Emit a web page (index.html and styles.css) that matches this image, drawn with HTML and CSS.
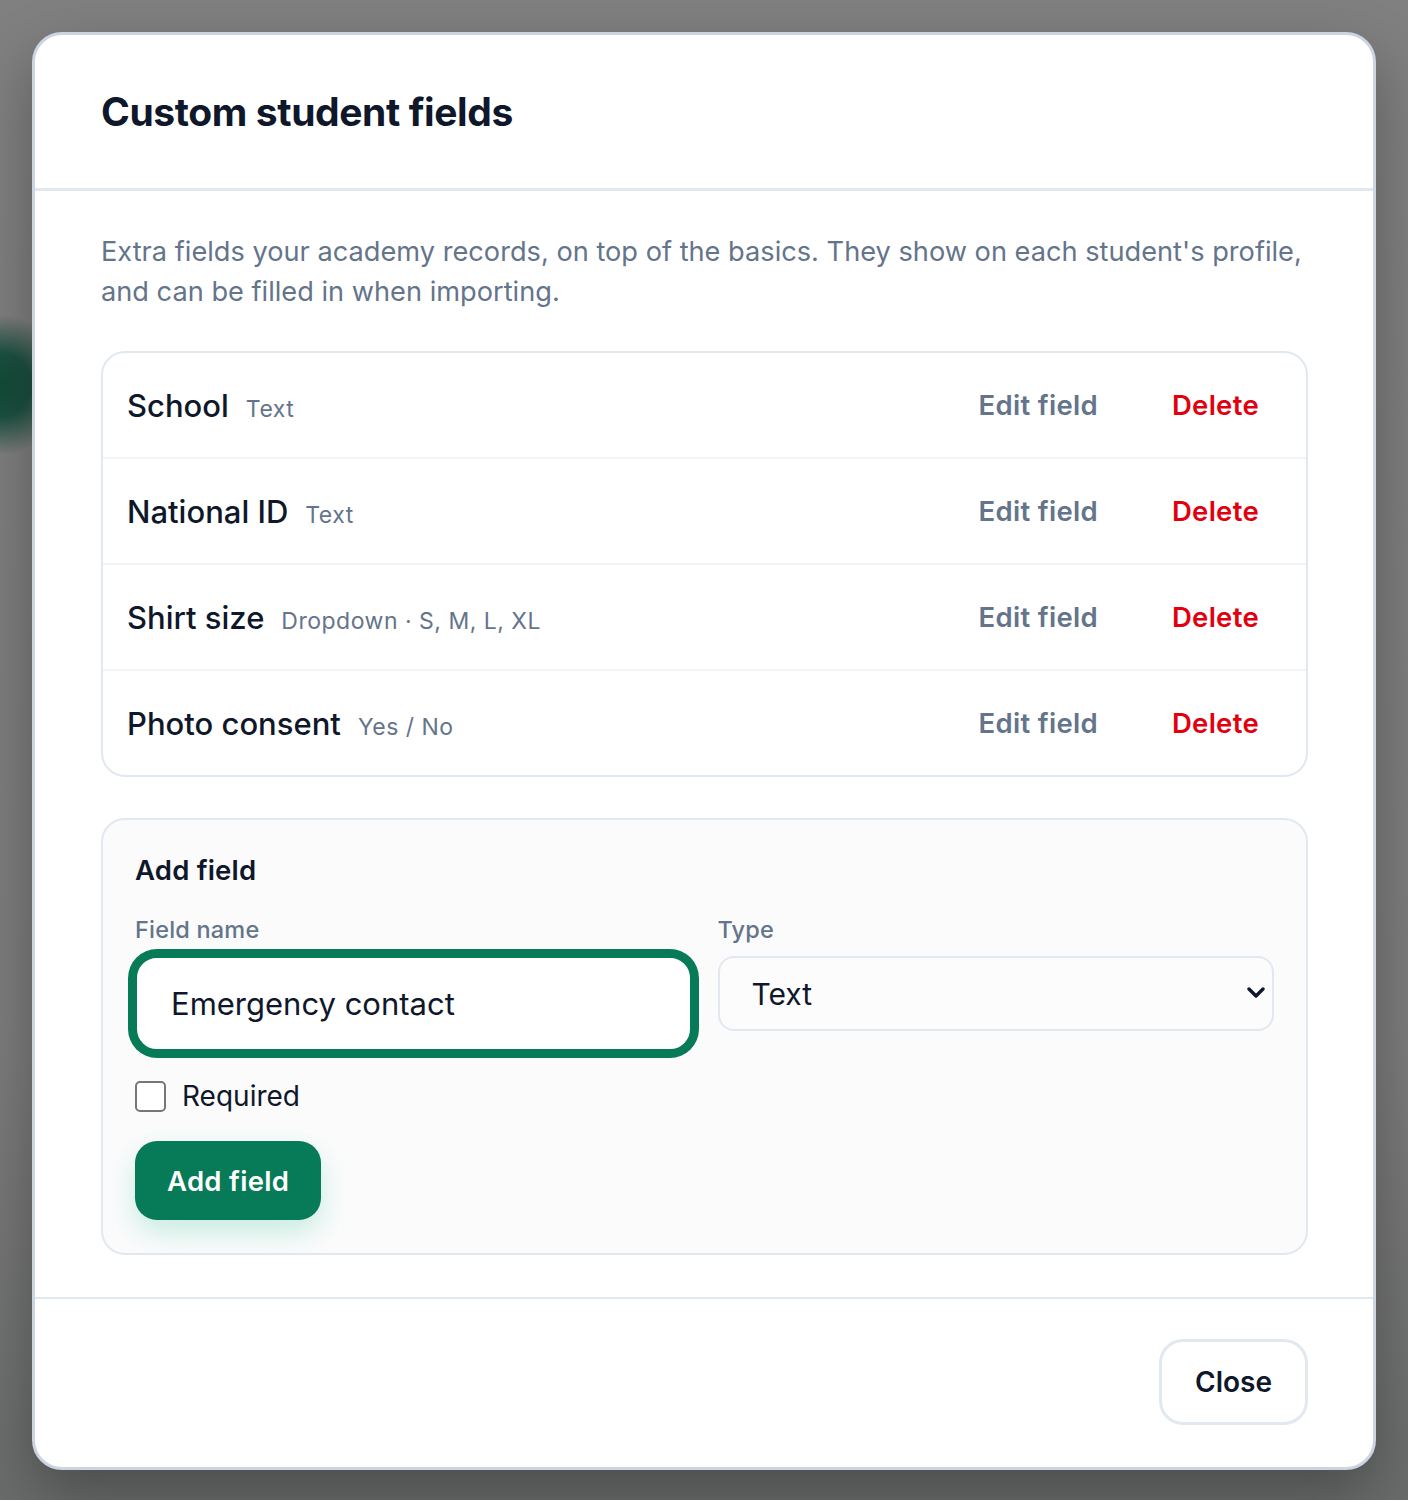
FILE: index.html
```html
<!DOCTYPE html>
<html lang="en">
<head>
    <meta charset="UTF-8">
    <meta name="viewport" content="width=device-width, initial-scale=1.0">
    <title>Custom student fields</title>
    <link rel="stylesheet" href="styles.css">
</head>
<body>
    <div class="modal">
        <div class="modal-header">
            <h2>Custom student fields</h2>
        </div>

        <div class="modal-body">
            <p class="intro">Extra fields your academy records, on top of the basics. They show on each student's profile, and can be filled in when importing.</p>

            <div class="field-list">
                <div class="field-row">
                    <div class="field-info">
                        <span class="field-name">School</span>
                        <span class="field-meta">Text</span>
                    </div>
                    <div class="field-actions">
                        <button class="link-btn">Edit field</button>
                        <button class="link-btn danger">Delete</button>
                    </div>
                </div>
                <div class="field-row">
                    <div class="field-info">
                        <span class="field-name">National ID</span>
                        <span class="field-meta">Text</span>
                    </div>
                    <div class="field-actions">
                        <button class="link-btn">Edit field</button>
                        <button class="link-btn danger">Delete</button>
                    </div>
                </div>
                <div class="field-row">
                    <div class="field-info">
                        <span class="field-name">Shirt size</span>
                        <span class="field-meta">Dropdown · S, M, L, XL</span>
                    </div>
                    <div class="field-actions">
                        <button class="link-btn">Edit field</button>
                        <button class="link-btn danger">Delete</button>
                    </div>
                </div>
                <div class="field-row">
                    <div class="field-info">
                        <span class="field-name">Photo consent</span>
                        <span class="field-meta">Yes / No</span>
                    </div>
                    <div class="field-actions">
                        <button class="link-btn">Edit field</button>
                        <button class="link-btn danger">Delete</button>
                    </div>
                </div>
            </div>

            <div class="add-card">
                <h3>Add field</h3>

                <div class="add-grid">
                    <div class="input-group">
                        <label for="field-name">Field name</label>
                        <input type="text" id="field-name" class="text-input" value="Emergency contact">
                    </div>
                    <div class="input-group">
                        <label for="field-type">Type</label>
                        <div class="select-wrap">
                            <select id="field-type" class="select-input">
                                <option>Text</option>
                                <option>Dropdown</option>
                                <option>Yes / No</option>
                            </select>
                            <svg class="chevron" width="18" height="12" viewBox="0 0 18 12"><polyline points="2,2 9,9 16,2" fill="none" stroke="#0f172a" stroke-width="3.4" stroke-linecap="round" stroke-linejoin="round"/></svg>
                        </div>
                    </div>
                </div>

                <label class="check-row">
                    <input type="checkbox" class="checkbox">
                    <span>Required</span>
                </label>

                <div>
                    <button class="primary-btn">Add field</button>
                </div>
            </div>
        </div>

        <div class="modal-footer">
            <button class="secondary-btn">Close</button>
        </div>
    </div>
</body>
</html>
```

FILE: styles.css
```css
* {
    box-sizing: border-box;
}

body {
    margin: 0;
    padding: 32px 0;
    font-family: Inter, "Noto Sans", sans-serif;
    color: #0f172a;
    background-color: #7e7e7e;
    background-image:
        radial-gradient(ellipse 70px 70px at 0px 385px, #124a37 0%, #1c5040 45%, rgba(126, 126, 126, 0) 100%),
        linear-gradient(to bottom, #808080 0%, #7c7c7c 70%, #6a6b6b 100%);
    min-height: 1500px;
}

.modal {
    width: 1344px;
    margin: 0 auto;
    background-color: white;
    border: 3px solid #cbd5e1;
    border-radius: 30px;
    box-shadow: 0 24px 60px rgba(0, 0, 0, 0.3);
}

.modal-header {
    height: 156px;
    padding: 0 66px;
    display: flex;
    align-items: center;
    border-bottom: 3px solid #e2e8f0;
}

.modal-header h2 {
    margin: 0;
    font-size: 39px;
    font-weight: 700;
    letter-spacing: -0.4px;
    line-height: 46px;
}

.modal-body {
    padding: 41px 65px 42px 66px;
}

.intro {
    margin: 0 0 39px;
    font-size: 27.2px;
    line-height: 40px;
    color: #64748b;
}

.field-list {
    border: 2px solid #e2e8f0;
    border-radius: 24px;
    margin-bottom: 41px;
}

.field-row {
    height: 106px;
    padding: 0 24px;
    display: flex;
    align-items: center;
    justify-content: space-between;
    border-bottom: 2px solid #f1f5f9;
}

.field-row:last-child {
    border-bottom: none;
    height: 104px;
}

.field-info {
    display: flex;
    align-items: baseline;
    gap: 17px;
}

.field-name {
    font-size: 31px;
    font-weight: 500;
}

.field-meta {
    font-size: 23px;
    letter-spacing: 0.5px;
    color: #64748b;
}

.field-actions {
    display: flex;
    gap: 26px;
    margin-right: -1px;
}

.link-btn {
    background: none;
    border: none;
    padding: 8px 24px;
    font-family: inherit;
    font-size: 27.5px;
    letter-spacing: 0.3px;
    font-weight: 600;
    color: #64748b;
    cursor: pointer;
}

.link-btn.danger {
    color: #e2000f;
}

.add-card {
    background-color: #fbfbfc;
    border: 2px solid #e2e8f0;
    border-radius: 24px;
    padding: 32px 32px 33px;
    display: flex;
    flex-direction: column;
    gap: 27px;
}

.add-card h3 {
    margin: 0 0 1px;
    font-size: 27.5px;
    letter-spacing: 0.2px;
    line-height: 36px;
    font-weight: 600;
}

.add-grid {
    display: grid;
    grid-template-columns: 1fr 1fr;
    gap: 26px;
    align-items: start;
}

.input-group label {
    display: block;
    font-size: 23.5px;
    letter-spacing: 0.2px;
    line-height: 28px;
    font-weight: 500;
    color: #64748b;
    margin-bottom: 12px;
}

.text-input {
    width: 100%;
    height: 95px;
    padding: 0 34px;
    font-family: inherit;
    font-size: 31px;
    color: #0f172a;
    background: white;
    border: 2px solid #077a57;
    border-radius: 22px;
    box-shadow: 0 0 0 7px #077a57;
    outline: none;
}

.select-wrap {
    position: relative;
}

.select-input {
    appearance: none;
    -webkit-appearance: none;
    width: 100%;
    height: 75px;
    padding: 0 32px;
    font-family: inherit;
    font-size: 30px;
    color: #0f172a;
    background: #fcfcfd;
    border: 2px solid #e2e8f0;
    border-radius: 16px;
}

.chevron {
    position: absolute;
    right: 9px;
    top: 31px;
    pointer-events: none;
}

.check-row {
    display: flex;
    align-items: center;
    gap: 16px;
    font-size: 28px;
    line-height: 36px;
}

.checkbox {
    appearance: none;
    -webkit-appearance: none;
    margin: 0;
    width: 31px;
    height: 31px;
    border: 2px solid #767676;
    border-radius: 5px;
    background: white;
}

.primary-btn {
    height: 79px;
    padding: 0 32px;
    background-color: #077a57;
    color: white;
    border: none;
    border-radius: 22px;
    font-family: inherit;
    font-size: 27.5px;
    letter-spacing: 0.3px;
    font-weight: 600;
    cursor: pointer;
    box-shadow: 0 12px 28px rgba(16, 185, 129, 0.22);
}

.modal-footer {
    border-top: 2px solid #e2e8f0;
    padding: 40px 65px 42px;
    display: flex;
    justify-content: flex-end;
}

.secondary-btn {
    height: 86px;
    padding: 0 33px;
    background: white;
    border: 3px solid #e2e8f0;
    border-radius: 24px;
    font-family: inherit;
    font-size: 28px;
    font-weight: 600;
    color: #0f172a;
    cursor: pointer;
}
```
